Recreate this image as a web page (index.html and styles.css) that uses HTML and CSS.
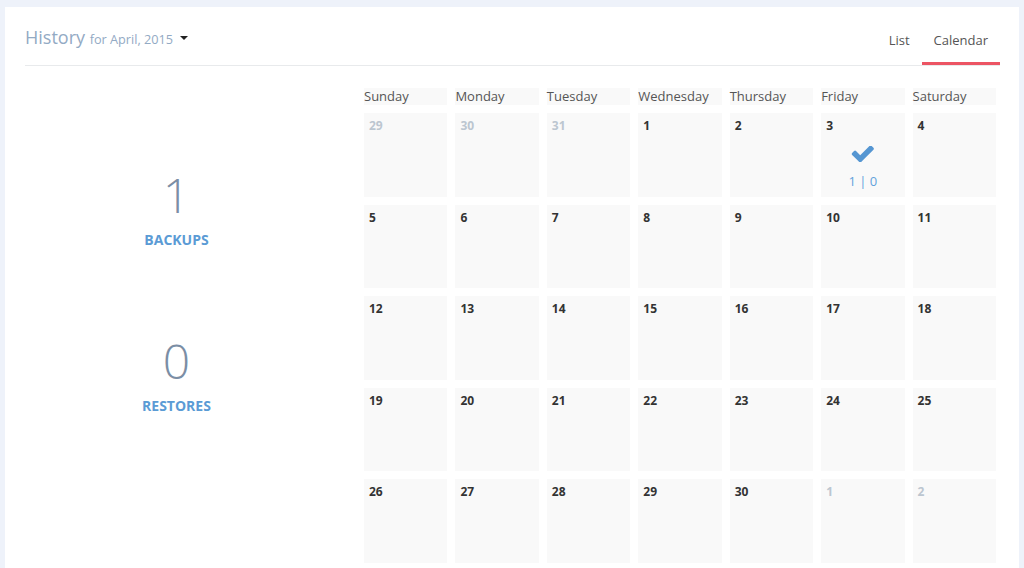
FILE: index.html
```html
<!DOCTYPE html>
<html lang="en">
<head>
    <meta charset="UTF-8">
    <meta name="viewport" content="width=device-width, initial-scale=1.0">
    <title>History</title>
    <link rel="stylesheet" href="styles.css">
</head>
<body>

<div class="panel">
    <div class="header">
        <div class="title">
            History <span class="period">for April, 2015</span> <span class="caret"></span>
        </div>
        <div class="tabs">
            <a class="tab">List</a>
            <a class="tab active">Calendar</a>
        </div>
    </div>

    <div class="content">
        <div class="stats">
            <div class="stat">
                <div class="stat-num">1</div>
                <div class="stat-label">BACKUPS</div>
            </div>
            <div class="stat">
                <div class="stat-num">0</div>
                <div class="stat-label">RESTORES</div>
            </div>
        </div>

        <div class="calendar">
            <div class="weekday">Sunday</div>
            <div class="weekday">Monday</div>
            <div class="weekday">Tuesday</div>
            <div class="weekday">Wednesday</div>
            <div class="weekday">Thursday</div>
            <div class="weekday">Friday</div>
            <div class="weekday">Saturday</div>

            <div class="day muted"><span class="num">29</span></div>
            <div class="day muted"><span class="num">30</span></div>
            <div class="day muted"><span class="num">31</span></div>
            <div class="day"><span class="num">1</span></div>
            <div class="day"><span class="num">2</span></div>
            <div class="day">
                <span class="num">3</span>
                <div class="event">
                    <svg class="check" viewBox="70 400 1610 1065" width="23" height="16"><path d="M1671 566q0 40-28 68l-724 724-136 136q-28 28-68 28t-68-28l-136-136-362-362q-28-28-28-68t28-68l136-136q28-28 68-28t68 28l294 295 656-657q28-28 68-28t68 28l136 136q28 28 28 68z"/></svg>
                    <div class="counts">1 | 0</div>
                </div>
            </div>
            <div class="day"><span class="num">4</span></div>

            <div class="day"><span class="num">5</span></div>
            <div class="day"><span class="num">6</span></div>
            <div class="day"><span class="num">7</span></div>
            <div class="day"><span class="num">8</span></div>
            <div class="day"><span class="num">9</span></div>
            <div class="day"><span class="num">10</span></div>
            <div class="day"><span class="num">11</span></div>

            <div class="day"><span class="num">12</span></div>
            <div class="day"><span class="num">13</span></div>
            <div class="day"><span class="num">14</span></div>
            <div class="day"><span class="num">15</span></div>
            <div class="day"><span class="num">16</span></div>
            <div class="day"><span class="num">17</span></div>
            <div class="day"><span class="num">18</span></div>

            <div class="day"><span class="num">19</span></div>
            <div class="day"><span class="num">20</span></div>
            <div class="day"><span class="num">21</span></div>
            <div class="day"><span class="num">22</span></div>
            <div class="day"><span class="num">23</span></div>
            <div class="day"><span class="num">24</span></div>
            <div class="day"><span class="num">25</span></div>

            <div class="day"><span class="num">26</span></div>
            <div class="day"><span class="num">27</span></div>
            <div class="day"><span class="num">28</span></div>
            <div class="day"><span class="num">29</span></div>
            <div class="day"><span class="num">30</span></div>
            <div class="day muted"><span class="num">1</span></div>
            <div class="day muted"><span class="num">2</span></div>
        </div>
    </div>
</div>

</body>
</html>
```

FILE: styles.css
```css
body {
    font-family: 'Open Sans', 'Liberation Sans', sans-serif;
    background-color: #eef2fa;
    margin: 0;
    padding: 7px 5px 0;
    height: 568px;
    box-sizing: border-box;
    overflow: hidden;
}

.panel {
    background-color: #fff;
    padding: 0 19px 0 20px;
    height: 561px;
    overflow: hidden;
}

.header {
    display: flex;
    justify-content: space-between;
    align-items: flex-end;
    height: 58px;
    border-bottom: 1px solid #e8eaec;
}

.title {
    font-size: 18px;
    line-height: 24px;
    color: #93aac4;
    margin-bottom: 14px;
}

.period {
    font-size: 12.7px;
}

.caret {
    display: inline-block;
    width: 0;
    height: 0;
    border-left: 4px solid transparent;
    border-right: 4px solid transparent;
    border-top: 4px solid #222;
    vertical-align: middle;
    margin-left: 2px;
    margin-top: -2px;
}

.tabs {
    display: flex;
}

.tab {
    font-size: 13px;
    line-height: 17px;
    color: #555;
    padding: 0 12px 13px;
    border-bottom: 3px solid transparent;
    cursor: pointer;
}

.tab.active {
    border-bottom-color: #ec5463;
}

.content {
    display: flex;
    padding-top: 22px;
}

.stats {
    width: 303px;
    margin-right: 36px;
    padding-top: 83px;
    text-align: center;
}

.stat {
    margin-bottom: 87px;
}

.stat-num {
    font-size: 48px;
    font-weight: 300;
    line-height: 48px;
    color: #7b8ea5;
    margin-bottom: 11px;
}

.stat-label {
    font-size: 14px;
    font-weight: 700;
    line-height: 20px;
    color: #5b9bd5;
}

.calendar {
    width: 632px;
    display: grid;
    grid-template-columns: repeat(7, 1fr);
    grid-template-rows: 17px;
    grid-auto-rows: 83.5px;
    gap: 8px;
}

.weekday {
    background-color: #f9f9f9;
    font-size: 13px;
    line-height: 17px;
    color: #555;
    white-space: nowrap;
}

.day {
    background-color: #f9f9f9;
    padding: 5px 5px 0;
}

.num {
    display: block;
    font-size: 12px;
    line-height: 16px;
    font-weight: 700;
    color: #333;
}

.day.muted .num {
    color: #bcc6d0;
}

.event {
    text-align: center;
    margin-top: 12px;
}

.check {
    display: block;
    margin: 0 auto;
    fill: #5596d2;
}

.counts {
    font-size: 13px;
    line-height: 18px;
    color: #63a2dc;
    margin-top: 10px;
}
```
